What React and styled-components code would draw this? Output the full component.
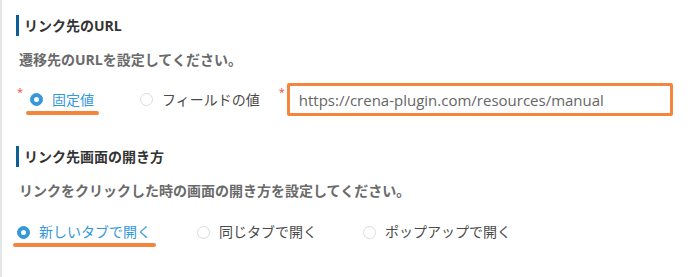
import React from 'react';
import styled, { createGlobalStyle } from 'styled-components';

const GlobalStyle = createGlobalStyle`
  html, body {
    margin: 0;
    padding: 0;
    background: #fff;
  }
  body {
    font-family: "Open Sans", "Noto Sans CJK JP", sans-serif;
  }
`;

const Page = styled.div`
  width: 693px;
  height: 277px;
  box-sizing: border-box;
  border-left: 2px solid #e4e7e9;
  padding: 15px 0 0 15px;
  overflow: hidden;
`;

const Section = styled.section`
  & + & {
    margin-top: 30px;
  }
`;

const Heading = styled.h3`
  margin: 0 0 0 -1px;
  height: 21px;
  line-height: 21px;
  border-left: 3px solid #0c5f94;
  padding-left: 5px;
  font-size: 14px;
  font-weight: 700;
  color: #333;
`;

const Desc = styled.p`
  margin: 14px 0 0 2px;
  line-height: 20px;
  font-size: 14px;
  font-weight: 700;
  color: #6a6a6a;
`;

const Row = styled.div`
  display: flex;
  align-items: center;
  margin-top: ${p => p.$top}px;
  min-height: 20px;
`;

const Required = styled.span`
  align-self: flex-start;
  margin-top: 3px;
  width: ${p => p.$w || 13}px;
  flex: none;
  font-size: 11px;
  line-height: 11px;
  color: #e74c3c;
`;

const RadioItem = styled.label`
  position: relative;
  display: flex;
  align-items: center;
  gap: 9px;
  margin-right: 46px;
  font-size: 14px;
  line-height: 20px;
  color: ${p => (p.$checked ? '#3498db' : '#4a4a4a')};

  &::after {
    content: '';
    display: ${p => (p.$mark ? 'block' : 'none')};
    position: absolute;
    left: -4px;
    right: -5px;
    top: 21px;
    height: 4px;
    border-radius: 2px;
    background: #f5843c;
  }
`;

const Circle = styled.span`
  box-sizing: border-box;
  width: 13px;
  height: 13px;
  border-radius: 50%;
  flex: none;
  background: ${p => (p.$checked ? '#3498db' : '#fff')};
  border: 1px solid ${p => (p.$checked ? '#3498db' : '#dcdcdc')};
  display: flex;
  align-items: center;
  justify-content: center;

  &::before {
    content: '';
    display: ${p => (p.$checked ? 'block' : 'none')};
    width: 5px;
    height: 5px;
    border-radius: 50%;
    background: #fff;
  }
`;

const InputWrap = styled.div`
  display: flex;
  align-self: stretch;
  margin-left: -27px;
`;

const UrlInput = styled.div`
  box-sizing: border-box;
  width: 386px;
  height: 33px;
  border: 3px solid #f5843c;
  border-radius: 2px;
  padding: 0 9px;
  display: flex;
  align-items: center;
  font-family: "Open Sans", sans-serif;
  font-size: 15px;
  color: #666;
`;

function Radio({ checked, mark, children }) {
  return (
    <RadioItem $checked={checked} $mark={mark}>
      <Circle $checked={checked} />
      {children}
    </RadioItem>
  );
}

export default function App() {
  return (
    <>
      <GlobalStyle />
      <Page>
        <Section>
          <Heading>リンク先のURL</Heading>
          <Desc>遷移先のURLを設定してください。</Desc>
          <Row $top={13}>
            <Required>*</Required>
            <Radio checked mark>固定値</Radio>
            <Radio>フィールドの値</Radio>
            <InputWrap>
              <Required $w={8}>*</Required>
              <UrlInput>https://crena-plugin.com/resources/manual</UrlInput>
            </InputWrap>
          </Row>
        </Section>
        <Section>
          <Heading>リンク先画面の開き方</Heading>
          <Desc>リンクをクリックした時の画面の開き方を設定してください。</Desc>
          <Row $top={21}>
            <Radio checked mark>新しいタブで開く</Radio>
            <Radio>同じタブで開く</Radio>
            <Radio>ポップアップで開く</Radio>
          </Row>
        </Section>
      </Page>
    </>
  );
}
